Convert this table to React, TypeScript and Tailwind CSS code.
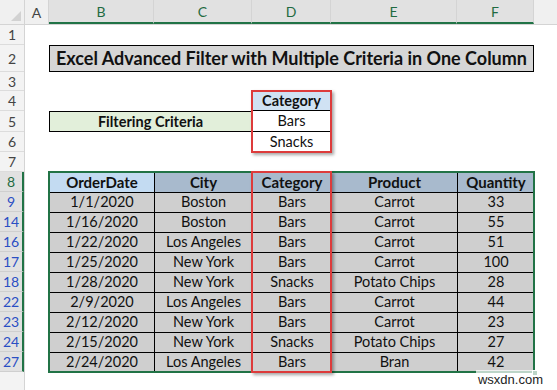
import React from "react";

const font = "font-['Lato','Liberation_Sans',sans-serif]";

const data = [
  { n: 9, date: "1/1/2020", city: "Boston", cat: "Bars", prod: "Carrot", qty: 33 },
  { n: 14, date: "1/16/2020", city: "Boston", cat: "Bars", prod: "Carrot", qty: 55 },
  { n: 16, date: "1/22/2020", city: "Los Angeles", cat: "Bars", prod: "Carrot", qty: 51 },
  { n: 17, date: "1/25/2020", city: "New York", cat: "Bars", prod: "Carrot", qty: 100 },
  { n: 18, date: "1/28/2020", city: "New York", cat: "Snacks", prod: "Potato Chips", qty: 28 },
  { n: 22, date: "2/9/2020", city: "Los Angeles", cat: "Bars", prod: "Carrot", qty: 44 },
  { n: 23, date: "2/12/2020", city: "New York", cat: "Bars", prod: "Carrot", qty: 23 },
  { n: 24, date: "2/15/2020", city: "New York", cat: "Snacks", prod: "Potato Chips", qty: 27 },
  { n: 27, date: "2/24/2020", city: "Los Angeles", cat: "Bars", prod: "Bran", qty: 42 },
];

// row header labels with their heights
const topRows = [
  { label: "1", h: "h-[20px]" },
  { label: "2", h: "h-[27px]" },
  { label: "3", h: "h-[19px]" },
  { label: "4", h: "h-[20px]" },
  { label: "5", h: "h-[21px]" },
  { label: "6", h: "h-[20px]" },
  { label: "7", h: "h-[20px]" },
];

const cols = [
  { l: "A", w: "w-[24px]", sel: false },
  { l: "B", w: "w-[105px]", sel: true },
  { l: "C", w: "w-[98px]", sel: true },
  { l: "D", w: "w-[79px]", sel: true },
  { l: "E", w: "w-[126px]", sel: true },
  { l: "F", w: "w-[77px]", sel: true },
];

function App() {
  return (
    <div className={`w-[557px] h-[390px] overflow-hidden bg-white flex flex-col relative text-[#111] ${font}`}>
      {/* column headers */}
      <div className="flex h-[25px] shrink-0 bg-[#f0f0f0] border-b border-[#d4d4d4]">
        <div className="w-[25px] h-full flex items-end justify-end pr-[3px] pb-[3px] border-r border-[#d4d4d4]">
          <svg width="10" height="10" viewBox="0 0 10 10">
            <polygon points="10,0 10,10 0,10" fill="#d2d2d2" />
          </svg>
        </div>
        {cols.map((c) => (
          <div
            key={c.l}
            className={`${c.w} h-full flex items-center justify-center text-[14px] border-r border-[#d4d4d4] ${
              c.sel ? "bg-[#e1e1e1] text-[#1f6b41] border-b-2 border-b-[#217346]" : "text-[#444]"
            }`}
          >
            {c.l}
          </div>
        ))}
        <div className="flex-1" />
      </div>

      <div className="flex flex-1">
        {/* row headers */}
        <div className="w-[25px] shrink-0 flex flex-col bg-[#f3f3f3] border-r border-[#d4d4d4] text-[14px]">
          {topRows.map((r) => (
            <div key={r.label} className={`${r.h} flex items-center justify-center border-b border-[#dcdcdc] text-[#444]`}>
              {r.label}
            </div>
          ))}
          <div className="h-[20px] flex items-center justify-center bg-[#e1e1e1] border-b border-[#cfcfcf] border-r-2 border-r-[#217346] text-[#1f6b41]">
            8
          </div>
          {data.map((r) => (
            <div
              key={r.n}
              className="h-[20px] flex items-center justify-center bg-[#e1e1e1] border-b border-[#cfcfcf] border-r-2 border-r-[#217346] text-[#2a4fc4]"
            >
              {r.n}
            </div>
          ))}
          <div className="flex-1" />
        </div>

        {/* sheet */}
        <div className="flex-1 grid grid-cols-[24px_105px_98px_79px_126px_77px_1fr] grid-rows-[20px_27px_19px_20px_21px_20px_20px_200px_1fr]">
          <div className="col-start-2 col-span-5 row-start-2 border border-black bg-[#d6d6d6] flex items-center justify-center font-bold text-[18px]">
            Excel Advanced Filter with Multiple Criteria in One Column
          </div>

          <div className="col-start-2 col-span-2 row-start-5 border border-black bg-[#e2efda] flex items-center justify-center font-bold text-[14.5px]">
            Filtering Criteria
          </div>

          <div className="col-start-4 row-start-4 row-span-3 relative flex flex-col text-[14.5px]">
            <div className="h-[20px] border border-black bg-[#d0e2f3] flex items-center justify-center font-bold">
              Category
            </div>
            <div className="h-[21px] border-b border-x border-black flex items-center justify-center">Bars</div>
            <div className="h-[20px] border-b border-x border-black flex items-center justify-center">Snacks</div>
            <div className="absolute -inset-[1px] border-2 border-[#dd3b3b] shadow-[2px_2px_3px_rgba(0,0,0,0.35)]" />
          </div>

          <div className="col-start-2 col-span-5 row-start-8 relative">
            <table className="table-fixed border-collapse w-[485px] text-[14.5px]">
              <colgroup>
                <col className="w-[105px]" />
                <col className="w-[98px]" />
                <col className="w-[79px]" />
                <col className="w-[126px]" />
                <col className="w-[77px]" />
              </colgroup>
              <thead>
                <tr className="h-[20px] font-bold text-[15px]">
                  <th className="border border-black bg-[#c3dbf2] p-0 leading-none">OrderDate</th>
                  <th className="border border-black bg-[#a8bacd] p-0 leading-none">City</th>
                  <th className="border border-black bg-[#a8bacd] p-0 leading-none">Category</th>
                  <th className="border border-black bg-[#a8bacd] p-0 leading-none">Product</th>
                  <th className="border border-black bg-[#a8bacd] p-0 leading-none">Quantity</th>
                </tr>
              </thead>
              <tbody>
                {data.map((r) => (
                  <tr key={r.n} className="h-[20px] bg-[#cfcfcf] text-center">
                    <td className="border border-black p-0 leading-none">{r.date}</td>
                    <td className="border border-black p-0 leading-none">{r.city}</td>
                    <td className="border border-black p-0 leading-none">{r.cat}</td>
                    <td className="border border-black p-0 leading-none">{r.prod}</td>
                    <td className="border border-black p-0 leading-none">{r.qty}</td>
                  </tr>
                ))}
              </tbody>
            </table>
            {/* selection outline */}
            <div className="absolute -inset-[1px] border-2 border-[#217346] pointer-events-none" />
            <div className="absolute -right-[4px] -bottom-[4px] w-[6px] h-[6px] bg-[#217346] border border-white" />
            {/* red highlight on Category column */}
            <div className="absolute left-[202px] w-[81px] -top-[1px] -bottom-[1px] border-2 border-[#dd3b3b] shadow-[2px_2px_3px_rgba(0,0,0,0.35)]" />
          </div>
        </div>
      </div>

      <div className="absolute right-[12px] bottom-[1px] text-[13px] text-[#222] font-['Liberation_Sans',sans-serif] bg-white/70 px-[2px]">
        wsxdn.com
      </div>
    </div>
  );
}

export default App;
